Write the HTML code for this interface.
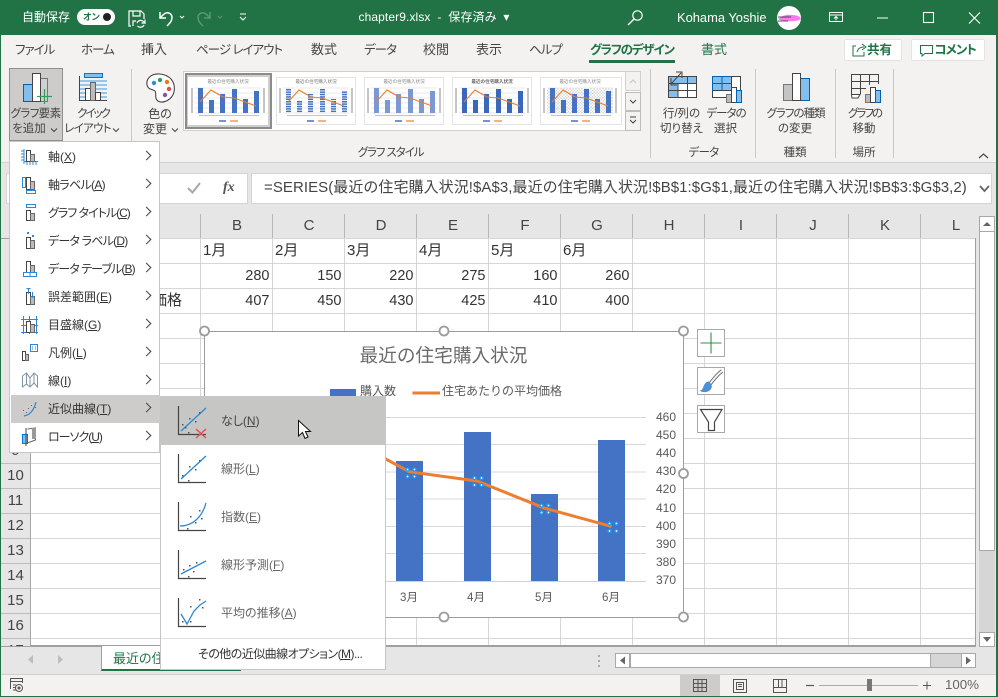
<!DOCTYPE html>
<html><head><meta charset="utf-8"><style>
html,body{margin:0;padding:0}
body{width:998px;height:697px;position:relative;overflow:hidden;background:#e6e6e6;font-family:"Liberation Sans","Noto Sans CJK JP",sans-serif;color:#444;font-size:12px}
.a{position:absolute}
.t{position:absolute;white-space:nowrap;line-height:20px;height:20px;font-feature-settings:"palt"}
.c{transform:translateX(-50%)}
.w{color:#fff}
.tab{font-size:12.5px;top:40px;color:#444;letter-spacing:-1px}
.k{font-size:13px;letter-spacing:0}
.h{font-size:15px;color:#444;top:216px;width:20px;text-align:center}
.r{font-size:15px;color:#444;left:1px;width:29px;text-align:center}
.v{font-size:15px;color:#333;top:266px;font-feature-settings:normal}
.n{position:absolute;font-size:14.5px;color:#333;width:69.500px;text-align:right;line-height:20px;height:20px}
.l{font-size:12px;color:#444}
.m{position:absolute;left:0;width:149px;height:28px}
.m span{position:absolute;left:37px;top:4px;white-space:nowrap;line-height:20px;font-size:12px;color:#333;font-feature-settings:"palt"}
.m svg{position:absolute;left:10px;top:4px}
.m b{position:absolute;left:132px;top:9px;width:6px;height:6px;border-top:1.3px solid #444;border-right:1.3px solid #444;transform:rotate(45deg);font-weight:normal}
.s{position:absolute;left:1px;width:224px;height:48px}
.s span{position:absolute;left:60px;top:14px;white-space:nowrap;line-height:20px;font-size:12px;color:#666;font-feature-settings:"palt"}
.s svg{position:absolute;left:14px;top:8px}
</style></head><body>

<!-- title bar -->
<div class="a" style="left:0;top:0;width:998px;height:35px;background:#217346"></div>
<div class="a" style="left:0;top:35px;width:998px;height:128px;background:#f3f2f1"></div>
<div class="a" style="left:0;top:162px;width:998px;height:1px;background:#d2d2d2"></div>
<div class="t w" style="left:22px;top:7px;font-size:12px">自動保存</div>
<div class="a" style="left:77px;top:9px;width:38px;height:16px;border-radius:8px;background:#fff"></div>
<div class="t" style="left:83px;top:7px;font-size:9px;color:#217346;font-weight:bold">オン</div>
<div class="a" style="left:103px;top:13px;width:8px;height:8px;border-radius:50%;background:#222"></div>
<div class="t w c" style="left:434px;top:7px;font-size:12px;letter-spacing:.1px">chapter9.xlsx&nbsp; - &nbsp;保存済み &nbsp;▾</div>
<div class="t w" style="left:677px;top:8px;font-size:12.9px">Kohama Yoshie</div>

<!-- tabs -->
<div class="t tab" style="left:15px">ファイル</div>
<div class="t tab" style="left:81px">ホーム</div>
<div class="t tab k" style="left:141px">挿入</div>
<div class="t tab" style="left:196px">ページ レイアウト</div>
<div class="t tab k" style="left:311px">数式</div>
<div class="t tab" style="left:364px">データ</div>
<div class="t tab k" style="left:423px">校閲</div>
<div class="t tab k" style="left:476px">表示</div>
<div class="t tab" style="left:529px">ヘルプ</div>
<div class="t tab" style="left:590px;color:#217346;font-weight:bold;letter-spacing:-1.200px">グラフのデザイン</div>
<div class="a" style="left:589px;top:60px;width:86px;height:3px;background:#217346"></div>
<div class="t tab k" style="left:701px;color:#217346">書式</div>
<div class="a" style="left:844px;top:39px;width:58px;height:22px;background:#fff;border:1px solid #e3e3e3;box-sizing:border-box;border-radius:2px"></div>
<div class="t" style="left:867px;top:40px;font-size:12.5px;font-weight:bold;color:#217346">共有</div>
<div class="a" style="left:911px;top:39px;width:74px;height:22px;background:#fff;border:1px solid #e3e3e3;box-sizing:border-box;border-radius:2px"></div>
<div class="t" style="left:934.500px;top:40px;font-size:12.5px;font-weight:bold;color:#217346;letter-spacing:-1px">コメント</div>

<!-- ribbon highlight -->
<div class="a" style="left:9px;top:68px;width:54px;height:73px;background:#cdcccb;border:1px solid #8f8f8f;box-sizing:border-box"></div>
<div class="t c l" style="left:35.500px;top:104px;font-size:11.5px;letter-spacing:-.6px">グラフ要素</div>
<div class="t c l" style="left:29px;top:119px;font-size:11.5px">を追加</div>
<div class="t c l" style="left:93px;top:104px;font-size:11.5px;letter-spacing:-2px">クイック</div>
<div class="t c l" style="left:87.500px;top:119px;font-size:11.5px;letter-spacing:-.7px">レイアウト</div>
<div class="t c l" style="left:160px;top:104px">色の</div>
<div class="t c l" style="left:155px;top:119px">変更</div>

<!-- gallery -->
<div class="a" style="left:183px;top:71px;width:458px;height:60px;background:#fff;border:1px solid #cfcfcf;box-sizing:border-box"></div>
<div class="a" style="left:185px;top:73px;width:87px;height:56px;background:#cfcfce;border:2px solid #8b8b8b;box-sizing:border-box"></div>

<svg width="0" height="0" style="position:absolute"><defs>
<symbol id="gr" viewBox="0 0 80 48"><g stroke="#e2e2e2" stroke-width=".7"><path d="M7 11H73M7 16H73M7 21H73M7 26H73M7 31H73M7 36H73"/></g><g fill="#c4c4c4"><rect x="3" y="11" width="2" height="25"/><rect x="75" y="11" width="2" height="25"/><rect x="11" y="38" width="60" height="1"/></g></symbol>
<symbol id="ln" viewBox="0 0 80 48"><path d="M12 25L23 13L35 20L46 21L57 25L68 29" fill="none" stroke="#ed7d31" stroke-width="1.100"/><path d="M31 44H38" stroke="#4472c4" stroke-width="1.500"/><path d="M42 44H50" stroke="#ed7d31" stroke-width="1.200"/></symbol>
<symbol id="br" viewBox="0 0 80 48"><rect x="10" y="11" width="5" height="25"/><rect x="21" y="23" width="5" height="13"/><rect x="32" y="17" width="5" height="19"/><rect x="44" y="12" width="5" height="24"/><rect x="55" y="22" width="5" height="14"/><rect x="66" y="14" width="5" height="22"/></symbol>
<pattern id="st" width="3" height="2.400" patternUnits="userSpaceOnUse"><rect width="3" height="1.500" fill="#4472c4"/></pattern>
<pattern id="hh" width="3" height="3" patternUnits="userSpaceOnUse"><path d="M0 3L3 0M0 0L3 3" stroke="#d0d0d0" stroke-width=".5"/></pattern>
</defs></svg>

<svg class="a" style="left:188px;top:77px" width="80" height="48"><rect width="80" height="48" fill="#fff"/><text x="40" y="6" font-size="4.600" text-anchor="middle" fill="#888">最近の住宅購入状況</text><use href="#gr" width="80" height="48"/><use href="#br" width="80" height="48" fill="#4472c4"/><use href="#ln" width="80" height="48"/></svg>
<svg class="a" style="left:276px;top:77px" width="80" height="48"><rect x=".5" y=".5" width="79" height="47" fill="#fff" stroke="#e4e4e4"/><text x="40" y="6" font-size="4.600" text-anchor="middle" fill="#777">最近の住宅購入状況</text><use href="#gr" width="80" height="48"/><use href="#br" width="80" height="48" fill="url(#st)"/><use href="#ln" width="80" height="48"/></svg>
<svg class="a" style="left:364px;top:77px" width="80" height="48"><rect x=".5" y=".5" width="79" height="47" fill="#fff" stroke="#e4e4e4"/><text x="40" y="6" font-size="4.600" text-anchor="middle" fill="#888">最近の住宅購入状況</text><use href="#gr" width="80" height="48"/><use href="#br" width="80" height="48" fill="#7c98d4"/><use href="#ln" width="80" height="48"/></svg>
<svg class="a" style="left:452px;top:77px" width="80" height="48"><rect x=".5" y=".5" width="79" height="47" fill="#fff" stroke="#e4e4e4"/><text x="40" y="6" font-size="4.600" font-weight="bold" text-anchor="middle" fill="#666">最近の住宅購入状況</text><use href="#gr" width="80" height="48"/><use href="#br" width="80" height="48" fill="#3a66bc"/><use href="#ln" width="80" height="48"/></svg>
<svg class="a" style="left:540px;top:77px" width="82" height="48"><rect x=".5" y=".5" width="81" height="47" fill="#fff" stroke="#e4e4e4"/><use href="#gr" width="80" height="48"/><rect x="7" y="11" width="66" height="25" fill="url(#hh)"/><text x="40" y="6" font-size="4.600" text-anchor="middle" fill="#888">最近の住宅購入状況</text><use href="#br" width="80" height="48" fill="#4472c4"/><use href="#ln" width="80" height="48"/></svg>

<div class="a" style="left:625px;top:71px;width:16px;height:20px;background:#f3f2f1;border:1px solid #cfcfcf;box-sizing:border-box"></div>
<div class="a" style="left:625px;top:92px;width:16px;height:19px;background:#f3f2f1;border:1px solid #bdbdbd;box-sizing:border-box"></div>
<div class="a" style="left:625px;top:111px;width:16px;height:20px;background:#f3f2f1;border:1px solid #bdbdbd;box-sizing:border-box"></div>

<div class="t c" style="left:390.500px;top:143px;font-size:11.5px;letter-spacing:-1.100px">グラフ スタイル</div>
<div class="t c l" style="left:681.500px;top:104px;font-size:11.5px">行/列の</div>
<div class="t c l" style="left:681.500px;top:119px;font-size:11.5px">切り替え</div>
<div class="t c l" style="left:726px;top:104px;font-size:11.5px;letter-spacing:-1px">データの</div>
<div class="t c l" style="left:725.500px;top:119px;font-size:11.5px">選択</div>
<div class="t c l" style="left:795.500px;top:104px;font-size:11.5px;letter-spacing:-1px">グラフの種類</div>
<div class="t c l" style="left:795px;top:119px;font-size:11.5px">の変更</div>
<div class="t c l" style="left:864.500px;top:104px;font-size:11.5px;letter-spacing:-2px">グラフの</div>
<div class="t c l" style="left:864px;top:119px;font-size:11.5px">移動</div>
<div class="t c l" style="left:703.500px;top:143px;font-size:11.5px;letter-spacing:-.7px">データ</div>
<div class="t c l" style="left:795px;top:143px;font-size:11.5px">種類</div>
<div class="t c l" style="left:864px;top:143px;font-size:11.5px">場所</div>

<!-- top icons svg -->
<svg class="a" style="left:0;top:0" width="998" height="165" fill="none">
<g stroke="#c8c8c8"><path d="M131.500 69V158M650.500 69V158M755.500 69V158M835.500 69V158M893.500 69V158"/></g>
<!-- save -->
<g stroke="#fff" stroke-width="1.200"><path d="M131 26H129V11H141L144 14V19"/><path d="M133 11V16H140V11"/><path d="M133 26V21H136"/><path d="M137 23a4 4 0 0 1 6.500-1.500L145 23V19.500M145 23H141.500M144 25a4 4 0 0 1-6.500 1"/></g>
<!-- undo -->
<path d="M160 12V18H166M160 18L164 14C168 11 172 14 172 17.500C172 21 170 23 167 26" stroke="#fff" stroke-width="1.500"/>
<path d="M180 16L182 18L184 16" stroke="#fff"/>
<path d="M210 12V18H204M210 18L206 14C202 11 198 14 198 17.500C198 21 200 23 203 26" stroke="#5b9677" stroke-width="1.500"/>
<path d="M218 16L220 18L222 16" stroke="#5b9677"/>
<path d="M240 14H246M240 17L243 20L246 17" stroke="#fff"/>
<!-- search -->
<circle cx="637.500" cy="15.500" r="4.700" stroke="#fff" stroke-width="1.200"/><path d="M634 19L628 25" stroke="#fff" stroke-width="1.400"/>
<!-- avatar -->
<circle cx="789" cy="18" r="12" fill="#fff"/>
<path d="M778 19C782 16 786 14 791 15C796 15 800 16 801 19C797 22 783 22 778 19Z" fill="#f47cf0"/><path d="M778 17H791M778 21H788" stroke="#222" stroke-width=".7"/>
<!-- window -->
<path d="M829.500 12.500H842.500V21.500H829.500ZM829.500 15H842.500M836 20.500V17M834 18.500L836 16.500L838 18.500" stroke="#fff"/>
<path d="M877 18H888" stroke="#fff"/>
<rect x="923.500" y="12.500" width="10" height="10" stroke="#fff" stroke-width="1.100"/>
<path d="M969 12.500L980 23.500M980 12.500L969 23.500" stroke="#fff" stroke-width="1.100"/>
<!-- share -->
<path d="M856 46H853V56H864V52M857 52C858 48 861 47 864 47M862 44L866 47L862 50" stroke="#217346"/>
<path d="M920.500 45.500H932.500V53.500H925L922 56V53.500H920.500Z" stroke="#217346"/>
<!-- add element icon -->
<rect x="23.500" y="84.500" width="9" height="17" fill="#83beec" stroke="#0063b1"/>
<rect x="40.500" y="78.500" width="7" height="23" fill="#d0d0d0" stroke="#777"/>
<rect x="32.500" y="73.500" width="8" height="28" fill="#fff" stroke="#444"/>
<path d="M37 96.500H52M44.500 89V104" stroke="#2f9e5f" stroke-width="1.200"/>
<path d="M51 128.500L54 131.500L57 128.500" stroke="#444"/>
<!-- quick layout -->
<path d="M80 81H107M80 85H107M80 89H107M80 93H107M80 97H107" stroke="#3f9be0"/>
<rect x="84.500" y="73.500" width="18" height="4" fill="#83beec" stroke="#0078d4"/>
<path d="M79.500 76V100.500H107" stroke="#444"/>
<rect x="85.500" y="88.500" width="5" height="12" fill="#fff" stroke="#444"/><rect x="90.500" y="82.500" width="5" height="18" fill="#bbb" stroke="#666"/><rect x="95.500" y="92.500" width="5" height="8" fill="#fff" stroke="#444"/>
<path d="M113 128.500L116 131.500L119 128.500M172 128.500L175 131.500L178 128.500" stroke="#444"/>
<!-- palette -->
<path d="M160 74C150 73 146 80 147 85C148 90 153 89 155 91C157 94 154 98 158 101C163 104 172 100 174 92C176 82 170 75 160 74Z" fill="#fff" stroke="#444" stroke-width="1.100"/>
<circle cx="154" cy="83" r="2.200" fill="#2e8fd8"/><circle cx="160" cy="80" r="2.200" fill="#2f9e5f"/><circle cx="167" cy="82" r="2.200" fill="#e27b1f"/><circle cx="169" cy="89" r="2.200" fill="#e24b4b"/><circle cx="165" cy="95" r="2.200" fill="#8a4fb5"/>
<!-- gallery arrows -->
<path d="M630 83L633 80L636 83" stroke="#c4c4c4"/><path d="M630 100L633 103L636 100" stroke="#444"/><path d="M630 117H636M630 120L633 123L636 120" stroke="#444"/>
<!-- row/col -->
<rect x="668.500" y="76.500" width="28" height="21" fill="#fff" stroke="#444"/>
<path d="M668.500 76.500H696V83.500H678V97.500H668.500Z" fill="#83beec"/>
<rect x="668.500" y="76.500" width="28" height="21" stroke="#444"/>
<path d="M668.500 83.500H696.500M668.500 90.500H696.500M678 83.500V97.500M687.500 76.500V97.500" stroke="#444"/>
<path d="M671 84L681 73M676 72H682V78M671 78V85H677" stroke="#444"/>
<!-- data select -->
<rect x="712.500" y="76.500" width="28" height="21" fill="#fff" stroke="#444"/>
<rect x="712.500" y="76.500" width="19" height="14" fill="#83beec" stroke="#0063b1"/>
<path d="M712.500 83.500H731.500M722 76.500V90.500" stroke="#0063b1"/>
<path d="M712.500 90.500H740.500M731.500 76.500V88" stroke="#444"/>
<rect x="726.500" y="94.500" width="5" height="8" fill="#bbb" stroke="#777"/><rect x="731.500" y="87.500" width="5" height="15" fill="#fff" stroke="#444"/><rect x="736.500" y="90.500" width="5" height="12" fill="#83beec" stroke="#0063b1"/>
<!-- change type -->
<rect x="783.500" y="84.500" width="9" height="16" fill="#c4c4c4" stroke="#777"/><rect x="800.500" y="78.500" width="9" height="22" fill="#83beec" stroke="#0063b1"/><rect x="792.500" y="73.500" width="8" height="27" fill="#fff" stroke="#444"/>
<!-- move -->
<path d="M851.500 94V74.500H878.500V84M851.500 81.500H878.500M851.500 88.500H866M860.500 74.500V94M869.500 74.500V85" stroke="#444"/>
<path d="M851.500 94.500H860L858 98H852Z" fill="#fff" stroke="#444"/>
<rect x="865.500" y="94.500" width="5" height="8" fill="#bbb" stroke="#777"/><rect x="870.500" y="87.500" width="5" height="15" fill="#fff" stroke="#444"/><rect x="875.500" y="90.500" width="5" height="12" fill="#83beec" stroke="#0063b1"/>
<path d="M979 158L983.500 154L988 158" stroke="#444" stroke-width="1.200"/>
</svg>

<!-- formula bar -->
<div class="a" style="left:6px;top:173px;width:242px;height:31px;background:#fff;border:1px solid #d4d4d4;box-sizing:border-box"></div>
<div class="a" style="left:251px;top:173px;width:741px;height:31px;background:#fff;border:1px solid #d4d4d4;box-sizing:border-box"></div>
<svg class="a" style="left:185px;top:180px" width="20" height="18" fill="none"><path d="M3 8L7.500 12.500L15 3" stroke="#a8a8a8" stroke-width="2"/></svg>
<div class="t" style="left:223px;top:178px;font-family:'Liberation Serif',serif;font-style:italic;font-weight:bold;font-size:14px;color:#555">fx</div>
<div class="t" style="left:264px;top:178px;font-size:15px;letter-spacing:.06px;color:#444;font-feature-settings:normal">=SERIES(最近の住宅購入状況!$A$3,最近の住宅購入状況!$B$1:$G$1,最近の住宅購入状況!$B$3:$G$3,2)</div>
<svg class="a" style="left:979px;top:184px" width="12" height="10" fill="none"><path d="M1 2L5.500 7L10 2" stroke="#666" stroke-width="1.800"/></svg>

<!-- headers -->
<div class="a" style="left:200px;top:214px;width:776px;height:24px;background-image:linear-gradient(90deg,#b8b8b8 1px,transparent 1px);background-size:72px 100%"></div>
<div class="a" style="left:0;top:238px;width:976px;height:1px;background:#a0a0a0"></div>
<div class="t h" style="left:227px">B</div><div class="t h" style="left:299px">C</div><div class="t h" style="left:371px">D</div><div class="t h" style="left:443px">E</div><div class="t h" style="left:515px">F</div><div class="t h" style="left:587px">G</div><div class="t h" style="left:659px">H</div><div class="t h" style="left:731px">I</div><div class="t h" style="left:803px">J</div><div class="t h" style="left:875px">K</div><div class="t h" style="left:946px">L</div>

<!-- cells -->
<div class="a" style="left:30px;top:238px;width:946px;height:408px;background:#fff;overflow:hidden;box-sizing:border-box;border-right:1px solid #a0a0a0;border-bottom:1px solid #a0a0a0">
<div class="a" style="left:0;top:0;width:946px;height:408px;background-image:linear-gradient(#d6d6d6 1px,transparent 1px);background-size:100% 25px;background-position:0 0"></div>
<div class="a" style="left:170px;top:0;width:776px;height:408px;background-image:linear-gradient(90deg,#d6d6d6 1px,transparent 1px);background-size:72px 100%"></div>
</div>
<div class="a" style="left:30px;top:214px;width:1px;height:432px;background:#a8a8a8"></div>

<div class="t v" style="left:32px">購入数</div>
<div class="t v" style="left:32px;top:291px">住宅あたりの平均価格</div>
<div class="t v" style="left:203px;top:241px">1月</div><div class="t v" style="left:275px;top:241px">2月</div><div class="t v" style="left:347px;top:241px">3月</div><div class="t v" style="left:419px;top:241px">4月</div><div class="t v" style="left:491px;top:241px">5月</div><div class="t v" style="left:563px;top:241px">6月</div>
<div class="n" style="left:200px;top:266px">280</div><div class="n" style="left:272px;top:266px">150</div><div class="n" style="left:344px;top:266px">220</div><div class="n" style="left:416px;top:266px">275</div><div class="n" style="left:488px;top:266px">160</div><div class="n" style="left:560px;top:266px">260</div>
<div class="n" style="left:200px;top:291px">407</div><div class="n" style="left:272px;top:291px">450</div><div class="n" style="left:344px;top:291px">430</div><div class="n" style="left:416px;top:291px">425</div><div class="n" style="left:488px;top:291px">410</div><div class="n" style="left:560px;top:291px">400</div>

<div class="t r" style="top:441px">9</div><div class="t r" style="top:466px">10</div><div class="t r" style="top:491px">11</div><div class="t r" style="top:516px">12</div><div class="t r" style="top:541px">13</div><div class="t r" style="top:566px">14</div><div class="t r" style="top:591px">15</div><div class="t r" style="top:616px">16</div><div class="t r" style="top:641px">17</div>
<div class="a" style="left:1px;top:463px;width:29px;height:1px;background:#bcbcbc;box-shadow:0 25px #bcbcbc,0 50px #bcbcbc,0 75px #bcbcbc,0 100px #bcbcbc,0 125px #bcbcbc,0 150px #bcbcbc,0 175px #bcbcbc"></div>

<!-- v scrollbar -->
<div class="a" style="left:979px;top:216px;width:16px;height:16px;background:#fff;border:1px solid #a8a8a8;box-sizing:border-box"></div>
<div class="a" style="left:979px;top:232px;width:16px;height:319px;background:#fff;border:1px solid #a8a8a8;border-top:0;box-sizing:border-box"></div>
<div class="a" style="left:979px;top:551px;width:16px;height:81px;background:#d6d6d6"></div>
<div class="a" style="left:979px;top:632px;width:16px;height:15px;background:#fff;border:1px solid #a8a8a8;box-sizing:border-box"></div>
<svg class="a" style="left:979px;top:216px" width="16" height="431"><path d="M4 10L8 6L12 10Z" fill="#666"/><path d="M4 421H12L8 426Z" fill="#666"/></svg>

<!-- tab bar -->
<div class="a" style="left:0;top:646px;width:976px;height:28px;background:#e6e6e6"></div>
<div class="a" style="left:0;top:646px;width:101px;height:1px;background:#a0a0a0"></div>
<div class="a" style="left:241px;top:646px;width:735px;height:1px;background:#a0a0a0"></div>
<div class="a" style="left:101px;top:646px;width:140px;height:25px;background:#fff;border-left:1px solid #a0a0a0;box-sizing:border-box;border-bottom:2px solid #217346"></div>
<div class="t" style="left:113px;top:649px;font-size:13px;color:#217346">最近の住宅購入状況</div>
<svg class="a" style="left:20px;top:650px" width="50" height="20"><path d="M13 5V14L8 9.500Z" fill="#bdbdbd"/><path d="M38 5V14L43 9.500Z" fill="#bdbdbd"/></svg>
<div class="a" style="left:598px;top:655px;width:2px;height:2px;background:#aaa;box-shadow:0 5px #aaa,0 10px #aaa"></div>
<div class="a" style="left:615px;top:653px;width:360px;height:15px;background:#d6d6d6;border:1px solid #a8a8a8;box-sizing:border-box"></div>
<div class="a" style="left:615px;top:653px;width:15px;height:15px;background:#fff;border:1px solid #a8a8a8;box-sizing:border-box"></div>
<div class="a" style="left:630px;top:653px;width:301px;height:15px;background:#fff;border:1px solid #a8a8a8;box-sizing:border-box"></div>
<div class="a" style="left:961px;top:653px;width:15px;height:15px;background:#fff;border:1px solid #a8a8a8;box-sizing:border-box"></div>
<svg class="a" style="left:615px;top:653px" width="361" height="15"><path d="M10 3.500V11.500L5 7.500Z" fill="#666"/><path d="M351 3.500V11.500L356 7.500Z" fill="#666"/></svg>

<!-- status bar -->
<div class="a" style="left:0;top:674px;width:998px;height:23px;background:#f3f2f1"></div>
<div class="a" style="left:0;top:674px;width:998px;height:1px;background:#d0d0d0"></div>
<div class="a" style="left:680px;top:675px;width:40px;height:21px;background:#cdcccb"></div>
<svg class="a" style="left:0;top:674px" width="998" height="23" fill="none">
<path d="M10.500 15V4.500H22.500V9M10.500 7.500H22.500M13 11H16M13 13.500H16M13 16H16" stroke="#555"/><circle cx="19" cy="14" r="3.500" stroke="#555"/><circle cx="19" cy="14" r="1.500" fill="#555"/>
<path d="M693.500 5.500H706.500V17.500H693.500ZM693.500 9.500H706.500M693.500 13.500H706.500M698 5.500V17.500M702 5.500V17.500" stroke="#555"/>
<path d="M733.500 5.500H746.500V18.500H733.500Z" stroke="#555"/><path d="M736.500 8.500H743.500V15.500H736.500ZM738 10.500H742M738 12.500H742" stroke="#555"/>
<path d="M773.500 5.500H786.500V18.500H773.500ZM773.500 13.500H786.500M778.500 5.500V13.500M782 5.500V13.500" stroke="#555"/>
<path d="M806 11.500H814" stroke="#555" stroke-width="1.200"/>
<path d="M819 11.500H918" stroke="#aaa"/><rect x="867" y="5" width="5" height="12" fill="#777"/>
<path d="M923 11.500H931M927 7.500V15.500" stroke="#555"/>
</svg>
<div class="t" style="left:945px;top:675px;font-size:13.3px;color:#666">100%</div>

<!-- chart -->
<svg class="a" style="left:0;top:0" width="998" height="697" fill="none">
<rect x="204.500" y="331.500" width="479" height="286" fill="#fff" stroke="#9c9c9c"/>
<path d="M204 417.500H646M204 444.500H646M204 472H646M204 499H646M204 526.500H646M204 553.500H646" stroke="#d9d9d9"/>
<path d="M204 581.500H646" stroke="#d0d0d0"/>
<g fill="#4472c4"><rect x="396" y="461" width="27" height="120"/><rect x="464" y="432" width="27" height="149"/><rect x="531" y="494" width="27" height="87"/><rect x="598" y="440" width="27" height="141"/><rect x="330" y="389" width="26" height="8"/></g>
<path d="M342 435.500L409.500 471.800L477 481L544.500 508.200L611.500 526.400" stroke="#ed7d31" stroke-width="3" stroke-linejoin="round"/>
<path d="M412.500 393H440" stroke="#ed7d31" stroke-width="3"/>
<g fill="#fff" stroke="#1e9bf0" stroke-width="1.300"><circle cx="407.500" cy="469.500" r="1.500"/><circle cx="414.500" cy="469.500" r="1.500"/><circle cx="407.500" cy="476.500" r="1.500"/><circle cx="414.500" cy="476.500" r="1.500"/><circle cx="474.500" cy="478" r="1.500"/><circle cx="481.500" cy="478" r="1.500"/><circle cx="474.500" cy="485" r="1.500"/><circle cx="481.500" cy="485" r="1.500"/><circle cx="541.500" cy="505.500" r="1.500"/><circle cx="548.500" cy="505.500" r="1.500"/><circle cx="541.500" cy="512.500" r="1.500"/><circle cx="548.500" cy="512.500" r="1.500"/><circle cx="609.500" cy="523.500" r="1.500"/><circle cx="616.500" cy="523.500" r="1.500"/><circle cx="609.500" cy="531" r="1.500"/><circle cx="616.500" cy="531" r="1.500"/></g>
<g fill="#fff" stroke="#9c9c9c" stroke-width="1.800"><circle cx="204.500" cy="331" r="4.500"/><circle cx="444" cy="331" r="4.500"/><circle cx="683.500" cy="331" r="4.500"/><circle cx="683.500" cy="473.500" r="4.500"/><circle cx="683.500" cy="617" r="4.500"/><circle cx="444" cy="617" r="4.500"/><circle cx="204.500" cy="617" r="4.500"/></g>
<!-- chart buttons -->
<g fill="#fff" stroke="#a8a8a8"><rect x="697.500" y="329.500" width="27" height="27"/><rect x="697.500" y="367.500" width="27" height="27"/><rect x="697.500" y="405.500" width="27" height="27"/></g>
<path d="M700.500 343H721.500M711 332.500V353.500" stroke="#2f8f4f" stroke-width="1.100"/>
<path d="M722 371C719 373 713 380 709.500 384.500" stroke="#555" stroke-width="3.600"/><path d="M722 371C719 373 713 380 709.500 384.500" stroke="#f2f2f2" stroke-width="2"/>
<path d="M708.500 381.500C706.500 381.500 704.500 383.500 703.500 386.500C702.500 389.500 701.500 390.500 699.500 390.500C702.500 393 709.500 393 711.500 388C712.500 386 711 383 708.500 381.500Z" fill="#4a90d9"/>
<path d="M700.500 409.500H722L714.500 422V430.500H708.500V422Z" fill="#fff" stroke="#444" stroke-width="1.200"/>
</svg>
<div class="t c" style="left:443.500px;top:346px;font-size:18.67px;color:#6b6b6b;font-feature-settings:normal">最近の住宅購入状況</div>
<div class="t" style="left:360px;top:381px;font-size:12px;color:#595959;font-feature-settings:normal">購入数</div>
<div class="t" style="left:442px;top:381px;font-size:12px;color:#595959;font-feature-settings:normal">住宅あたりの平均価格</div>
<div class="t" style="left:656px;top:407px;font-size:12px;color:#595959">460</div>
<div class="t" style="left:656px;top:425px;font-size:12px;color:#595959">450</div>
<div class="t" style="left:656px;top:443px;font-size:12px;color:#595959">440</div>
<div class="t" style="left:656px;top:461px;font-size:12px;color:#595959">430</div>
<div class="t" style="left:656px;top:479px;font-size:12px;color:#595959">420</div>
<div class="t" style="left:656px;top:498px;font-size:12px;color:#595959">410</div>
<div class="t" style="left:656px;top:516px;font-size:12px;color:#595959">400</div>
<div class="t" style="left:656px;top:534px;font-size:12px;color:#595959">390</div>
<div class="t" style="left:656px;top:552px;font-size:12px;color:#595959">380</div>
<div class="t" style="left:656px;top:570px;font-size:12px;color:#595959">370</div>
<div class="t c" style="left:409px;top:588px;font-size:11.5px;color:#595959">3月</div>
<div class="t c" style="left:476px;top:588px;font-size:11.5px;color:#595959">4月</div>
<div class="t c" style="left:544px;top:588px;font-size:11.5px;color:#595959">5月</div>
<div class="t c" style="left:611px;top:588px;font-size:11.5px;color:#595959">6月</div>

<!-- menu 1 -->
<div class="a" style="left:9px;top:141px;width:151px;height:312px;background:#fff;border:1px solid #c6c6c6;box-sizing:border-box"></div>
<div class="a" style="left:11px;top:143px;width:149px;height:308px">
<div class="m" style="top:0"><svg width="20" height="20" fill="none"><path d="M3 2V17M0 4H3M0 7H3M0 10H3M0 13H3M3 14.500H17M6 15V18M9 15V18M12 15V18M15 15V18" stroke="#2b88d8"/><rect x="5.500" y="3.500" width="4" height="11" fill="#fff" stroke="#444"/><rect x="9.500" y="7.500" width="4" height="7" fill="#bbb" stroke="#666"/></svg><span>軸(<u>X</u>)</span><b></b></div>
<div class="m" style="top:28px"><svg width="20" height="20" fill="none"><rect x="1.500" y="2.500" width="3" height="10" stroke="#2b88d8"/><rect x="5.500" y="2.500" width="4" height="12" fill="#fff" stroke="#444"/><rect x="9.500" y="6.500" width="4" height="8" fill="#bbb" stroke="#666"/><rect x="5.500" y="15.500" width="9" height="3" stroke="#2b88d8"/></svg><span style="letter-spacing:-.7px">軸ラベル(<u>A</u>)</span><b></b></div>
<div class="m" style="top:56px"><svg width="20" height="20" fill="none"><rect x="5.500" y="1.500" width="9" height="3" stroke="#2b88d8"/><rect x="5.500" y="7.500" width="4" height="10" fill="#fff" stroke="#444"/><rect x="9.500" y="10.500" width="4" height="7" fill="#bbb" stroke="#666"/></svg><span style="letter-spacing:-1px">グラフ タイトル(<u>C</u>)</span><b></b></div>
<div class="m" style="top:84px"><svg width="20" height="20" fill="none"><rect x="6" y="1" width="2" height="2" fill="#2b88d8"/><rect x="11" y="4" width="2" height="2" fill="#2b88d8"/><rect x="5.500" y="6.500" width="4" height="11" fill="#fff" stroke="#444"/><rect x="9.500" y="9.500" width="4" height="8" fill="#bbb" stroke="#666"/></svg><span style="letter-spacing:-.8px">データ ラベル(<u>D</u>)</span><b></b></div>
<div class="m" style="top:112px"><svg width="20" height="20" fill="none"><rect x="5.500" y="2.500" width="4" height="11" fill="#fff" stroke="#444"/><rect x="9.500" y="6.500" width="4" height="7" fill="#bbb" stroke="#666"/><path d="M2.500 13.500H15.500V17.500H2.500ZM9 13.500V17.500" stroke="#2b88d8"/></svg><span style="letter-spacing:-.9px">データ テーブル(<u>B</u>)</span><b></b></div>
<div class="m" style="top:140px"><svg width="20" height="20" fill="none"><rect x="5.500" y="5.500" width="4" height="12" fill="#fff" stroke="#444"/><rect x="9.500" y="9.500" width="4" height="8" fill="#bbb" stroke="#666"/><path d="M7.500 1.500V7M5.500 1.500H9.500M11.500 5V11" stroke="#2b88d8"/></svg><span>誤差範囲(<u>E</u>)</span><b></b></div>
<div class="m" style="top:168px"><svg width="20" height="20" fill="none"><path d="M0 4.500H17M0 10.500H17M0 17.500H17M2.500 1V19M8.500 1V19M15.500 1V19" stroke="#2b88d8"/><rect x="5.500" y="6.500" width="4" height="11" fill="#fff" stroke="#444"/><rect x="9.500" y="9.500" width="4" height="8" fill="#bbb" stroke="#666"/></svg><span>目盛線(<u>G</u>)</span><b></b></div>
<div class="m" style="top:196px"><svg width="20" height="20" fill="none"><rect x="1.500" y="8.500" width="3" height="9" fill="#fff" stroke="#444"/><rect x="4.500" y="11.500" width="3" height="6" fill="#bbb" stroke="#666"/><rect x="9.500" y="1.500" width="7" height="7" stroke="#2b88d8"/><path d="M11 4H12M14 4H15M11 6H12M14 6H15" stroke="#2b88d8"/></svg><span>凡例(<u>L</u>)</span><b></b></div>
<div class="m" style="top:224px"><svg width="20" height="20" fill="none"><path d="M1.500 5L5.500 2L9 7L13 2L16.500 5V16L13 12L9 16L5.500 13L1.500 16Z" stroke="#7f93a6"/><path d="M5.500 2V13M9 7V16M13 2V12" stroke="#7f93a6"/></svg><span>線(<u>I</u>)</span><b></b></div>
<div class="m" style="top:252px;background:#cdcccb"><svg width="20" height="20" fill="none"><path d="M3 17C9 16 13 11 15 3" stroke="#2b88d8" stroke-width="1.200"/><g fill="#666"><rect x="2" y="11" width="1" height="1"/><rect x="5" y="13" width="1" height="1"/><rect x="7" y="9" width="1" height="1"/><rect x="10" y="6" width="1" height="1"/><rect x="11" y="11" width="1" height="1"/><rect x="14" y="8" width="1" height="1"/></g></svg><span>近似曲線(<u>T</u>)</span><b></b></div>
<div class="m" style="top:280px"><svg width="20" height="20" fill="none"><rect x="1.500" y="7.500" width="5" height="9" fill="#83beec" stroke="#0078d4"/><path d="M6.500 2L14.500 1V13L6.500 16" stroke="#666"/><rect x="11" y="1" width="4" height="11" fill="#999"/><path d="M5 1V19" stroke="#444"/></svg><span style="letter-spacing:-1px">ローソク(<u>U</u>)</span><b></b></div>
</div>

<!-- submenu -->
<div class="a" style="left:160px;top:396px;width:226px;height:274px;background:#fff;border:1px solid #c6c6c6;box-sizing:border-box"></div>
<div class="a" style="left:160px;top:396px;width:226px;height:274px">
<div class="s" style="top:1px;background:#c6c6c5"><svg width="34" height="34" fill="none"><path d="M3.500 1V29.500H31" stroke="#444" stroke-width="1.200"/><path d="M6 26L31 3" stroke="#2b88d8" stroke-width="1.300"/><g fill="#555"><rect x="7" y="19" width="1.500" height="1.500"/><rect x="13" y="27" width="1.500" height="1.500"/><rect x="14" y="13" width="1.500" height="1.500"/><rect x="20" y="16" width="1.500" height="1.500"/><rect x="24" y="7" width="1.500" height="1.500"/><rect x="10" y="22" width="1.500" height="1.500"/></g><path d="M21 24L31 33M31 24L21 33" stroke="#e25050" stroke-width="1.500"/></svg><span style="color:#444">なし(<u>N</u>)</span></div>
<div class="s" style="top:49px"><svg width="34" height="34" fill="none"><path d="M3.500 1V29.500H31" stroke="#444" stroke-width="1.200"/><path d="M6 26L31 3" stroke="#2b88d8" stroke-width="1.300"/><g fill="#555"><rect x="7" y="22" width="1.500" height="1.500"/><rect x="13" y="27" width="1.500" height="1.500"/><rect x="14" y="13" width="1.500" height="1.500"/><rect x="20" y="16" width="1.500" height="1.500"/><rect x="24" y="7" width="1.500" height="1.500"/></g></svg><span>線形(<u>L</u>)</span></div>
<div class="s" style="top:97px"><svg width="34" height="34" fill="none"><path d="M3.500 1V29.500H31" stroke="#444" stroke-width="1.200"/><path d="M5 25C18 25 27 16 31 2" stroke="#2b88d8" stroke-width="1.300"/><g fill="#555"><rect x="12" y="27" width="1.500" height="1.500"/><rect x="15" y="15" width="1.500" height="1.500"/><rect x="20" y="21" width="1.500" height="1.500"/><rect x="24" y="9" width="1.500" height="1.500"/><rect x="26" y="17" width="1.500" height="1.500"/></g></svg><span>指数(<u>E</u>)</span></div>
<div class="s" style="top:145px"><svg width="34" height="34" fill="none"><path d="M3.500 1V29.500H31" stroke="#444" stroke-width="1.200"/><path d="M6 25L31 12" stroke="#2b88d8" stroke-width="1.300"/><g fill="#555"><rect x="8" y="20" width="1.500" height="1.500"/><rect x="13" y="27" width="1.500" height="1.500"/><rect x="14" y="16" width="1.500" height="1.500"/><rect x="18" y="22" width="1.500" height="1.500"/><rect x="21" y="13" width="1.500" height="1.500"/></g></svg><span>線形予測(<u>F</u>)</span></div>
<div class="s" style="top:193px"><svg width="34" height="34" fill="none"><path d="M3.500 1V29.500H31" stroke="#444" stroke-width="1.200"/><path d="M6 17L12 27L19 14L25 8L31 4" stroke="#2b88d8" stroke-width="1.300"/><g fill="#555"><rect x="7" y="24" width="1.500" height="1.500"/><rect x="15" y="24" width="1.500" height="1.500"/><rect x="15" y="9" width="1.500" height="1.500"/><rect x="24" y="2" width="1.500" height="1.500"/><rect x="27" y="10" width="1.500" height="1.500"/></g></svg><span>平均の推移(<u>A</u>)</span></div>
<div class="a" style="left:1px;top:242px;width:224px;height:1px;background:#e0e0e0"></div>
<div class="t" style="left:38px;top:248px;font-size:12px;color:#333;letter-spacing:-.55px">その他の近似曲線オプション(<u>M</u>)...</div>
</div>

<!-- cursor -->
<svg class="a" style="left:295px;top:418px" width="20" height="24"><path d="M3.500 2.500V18L7.500 14.500L10 20.500L13 19L10.500 13.500H15.500Z" fill="#fff" stroke="#111"/></svg>

<!-- window border -->
<div class="a" style="left:0;top:35px;width:1px;height:662px;background:#217346"></div>
<div class="a" style="left:996px;top:35px;width:2px;height:662px;background:#217346"></div>
<div class="a" style="left:0;top:696px;width:998px;height:1px;background:#217346"></div>
</body></html>
